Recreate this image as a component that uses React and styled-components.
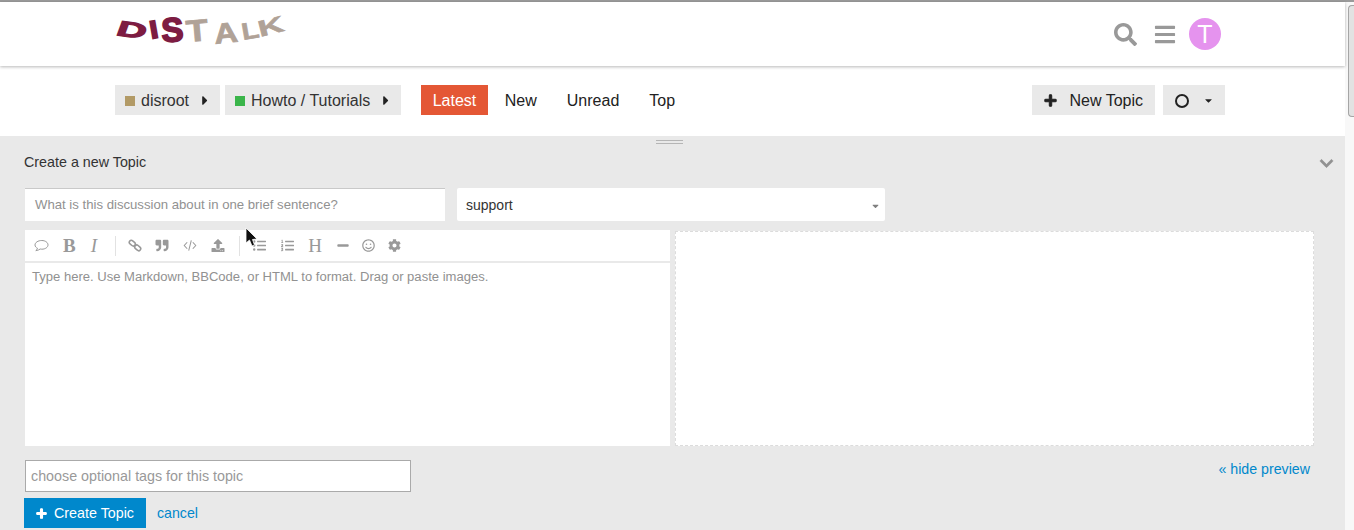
import React from "react";
import styled, { createGlobalStyle } from "styled-components";
import {
  FaSearch, FaBars, FaPlus, FaCaretRight, FaCaretDown, FaChevronDown,
  FaQuoteRight, FaUpload, FaListUl, FaListOl, FaMinus, FaRegSmile, FaCog,
} from "react-icons/fa";

const Global = createGlobalStyle`
  html, body {
    margin: 0;
    height: 530px;
    overflow: hidden;
    background: #fff;
    font-family: "Liberation Sans", Arial, sans-serif;
    color: #222;
  }
  * { box-sizing: border-box; }
`;

const Window = styled.div`
  position: relative;
  display: flex;
  height: 530px;
  border-top: 2px solid #9a9a9a;
`;
const Page = styled.div`
  flex: 1;
  min-width: 0;
  display: flex;
  flex-direction: column;
`;
const Scrollbar = styled.div`
  width: 9px;
  background: #f8f8f8;
  padding: 3px 0 0 3px;
`;
const Thumb = styled.div`
  height: 112px;
  background: #e2e2e2;
  border: 1px solid #a5a5a5;
  border-right: none;
  border-radius: 4px 0 0 4px;
`;

const Header = styled.header`
  height: 64px;
  padding: 0 124px 0 115px;
  display: flex;
  justify-content: space-between;
  background: #fff;
  box-shadow: 0 1px 3px rgba(0, 0, 0, 0.28);
  position: relative;
`;
const Logo = styled.svg`
  width: 176px;
  height: 34px;
  margin-top: 11px;
  overflow: visible;
`;
const LogoLetter = styled.text`
  font-family: "Liberation Sans", sans-serif;
  font-weight: 700;
  font-size: 30px;
  fill: ${(p) => (p.$dark ? "#7d1c42" : "#b0a297")};
  stroke: ${(p) => (p.$dark ? "#7d1c42" : "#b0a297")};
  stroke-width: ${(p) => (p.$dark ? 1.6 : 0.8)};
`;
const HeaderIcons = styled.div`
  display: flex;
  align-items: center;
  height: 64px;
  color: #999;
`;
const SearchIcon = styled(FaSearch)`
  width: 23px;
  height: 23px;
  margin-right: 17px;
`;
const BarsIcon = styled(FaBars)`
  width: 22px;
  height: 23px;
  margin-right: 13px;
`;
const Avatar = styled.div`
  width: 32px;
  height: 32px;
  border-radius: 50%;
  background: #e593ee;
  color: #fff;
  font-size: 25px;
  line-height: 32px;
  text-align: center;
`;

const Nav = styled.nav`
  height: 70px;
  padding: 19px 120px 0 115px;
  display: flex;
  background: #fff;
`;
const Crumb = styled.div`
  height: 30px;
  display: flex;
  align-items: center;
  background: #e9e9e9;
  padding: 1px 10px 0;
  margin-right: 5px;
  font-size: 16px;
  color: #333;
  svg { width: 10px; height: 15px; color: #222; margin-left: 11px; }
`;
const Swatch = styled.span`
  width: 10px;
  height: 10px;
  margin-right: 6px;
  background: ${(p) => p.$color};
`;
const Tabs = styled.div`
  display: flex;
  margin-left: 15px;
  flex: 1;
`;
const Tab = styled.div`
  height: 30px;
  line-height: 31px;
  padding: 0 ${(p) => (p.$active ? 11.5 : 12)}px;
  margin-right: ${(p) => p.$mr || 5}px;
  font-size: 16px;
  color: ${(p) => (p.$active ? "#fff" : "#222")};
  background: ${(p) => (p.$active ? "#e45735" : "transparent")};
`;
const NavButton = styled.div`
  height: 30px;
  display: flex;
  align-items: center;
  background: #e9e9e9;
  padding: 1px 12px 0;
  margin-left: 8px;
  font-size: 16px;
  color: #222;
`;
const PlusIcon = styled(FaPlus)`
  width: 13px;
  height: 13px;
  margin-right: 12px;
  color: #222;
  stroke-width: 40;
`;
const Ring = styled.span`
  width: 14px;
  height: 14px;
  border: 2px solid #222;
  border-radius: 50%;
  margin-right: 15px;
`;
const DropCaret = styled(FaCaretDown)`
  width: 9px;
  height: 11px;
  color: #222;
`;

const Composer = styled.section`
  position: relative;
  flex: 1;
  background: #e9e9e9;
  padding: 0 31px 0 24px;
`;
const Grip = styled.div`
  position: absolute;
  left: 656px;
  top: 4px;
  width: 27px;
  height: 4px;
  border-top: 1px solid #b5b5b5;
  border-bottom: 1px solid #b5b5b5;
`;
const ComposerHead = styled.div`
  height: 52px;
  display: flex;
  align-items: center;
  justify-content: space-between;
  font-size: 14.3px;
  color: #333;
  svg { width: 15px; height: 15px; color: #919191; margin-right: -20px; margin-top: 2px; stroke-width: 20; }
`;
const TitleRow = styled.div`
  display: flex;
  margin-left: 1px;
`;
const TitleInput = styled.div`
  width: 420px;
  height: 33px;
  line-height: 31px;
  padding-left: 10px;
  background: #fff;
  border-top: 1px solid #c9c9c9;
  font-size: 13.17px;
  color: #919191;
`;
const Select = styled.div`
  width: 428px;
  height: 33px;
  margin-left: 12px;
  padding: 0 9px;
  background: #fff;
  border-radius: 2px;
  display: flex;
  align-items: center;
  justify-content: space-between;
  font-size: 14px;
  color: #333;
  svg { width: 7px; height: 10px; color: #808080; margin-right: -3px; margin-top: 2px; }
`;
const EditorRow = styled.div`
  display: flex;
  margin: 9px 0 0 1px;
  height: 216px;
`;
const Editor = styled.div`
  width: 645px;
  background: #fff;
  display: flex;
  flex-direction: column;
`;
const Toolbar = styled.div`
  height: 33px;
  flex: none;
  border-bottom: 2px solid #e9e9e9;
  display: flex;
  align-items: center;
  padding-left: 9px;
  color: #999;
`;
const ToolIcon = styled.span`
  width: ${(p) => p.$w || 14}px;
  margin-right: ${(p) => p.$mr || 14}px;
  height: 14px;
  display: flex;
  align-items: center;
  justify-content: center;
  svg { width: 100%; height: 13px; }
`;
const ToolGlyph = styled.span`
  width: ${(p) => p.$w}px;
  margin-right: ${(p) => p.$mr}px;
  font-family: "Liberation Serif", serif;
  font-size: ${(p) => p.$size || 17}px;
  font-weight: ${(p) => (p.$bold ? 700 : 400)};
  font-style: ${(p) => (p.$italic ? "italic" : "normal")};
  line-height: 14px;
  text-align: center;
`;
const ToolDivider = styled.span`
  width: 1px;
  height: 20px;
  background: #e2e2e2;
  margin-right: 12px;
`;
const EditorText = styled.div`
  padding: 6px 7px;
  font-size: 13.06px;
  line-height: 16px;
  color: #919191;
`;
const Preview = styled.div`
  width: 639px;
  margin: 1px 0 0 5px;
  background: #fff;
  border: 1px dashed #dcdcdc;
`;
const TagsRow = styled.div`
  display: flex;
  justify-content: space-between;
  margin: 14px 0 0 1px;
`;
const TagsInput = styled.div`
  width: 386px;
  height: 32px;
  line-height: 30px;
  padding-left: 5px;
  background: #fff;
  border: 1px solid #aaa;
  font-size: 14.3px;
  color: #999;
`;
const Link = styled.span`
  font-size: 14.2px;
  color: #0088cc;
`;
const HidePreview = styled(Link)`
  margin: 1px 4px 0 0;
  line-height: 16px;
`;
const Actions = styled.div`
  display: flex;
  align-items: center;
  margin-top: 6px;
`;
const CreateButton = styled.div`
  width: 122px;
  height: 30px;
  display: flex;
  align-items: center;
  padding-left: 12px;
  background: #0088cc;
  color: #fff;
  font-size: 14.3px;
  margin-right: 11px;
  svg { width: 11px; height: 11px; margin-right: 7px; stroke-width: 50; }
`;
const Cursor = styled.svg`
  position: absolute;
  left: 245px;
  top: 225px;
  width: 14px;
  height: 22px;
`;

const logoLetters = [
  { c: "D", dark: true, t: "translate(0 22) rotate(8) skewX(-12) scale(1.35 0.72)" },
  { c: "I", dark: true, t: "translate(36 26) rotate(-10) scale(1.05 0.85)" },
  { c: "S", dark: true, t: "translate(47 29) rotate(-3) scale(1.1 1.12)" },
  { c: "T", t: "translate(72 29) rotate(-5) scale(1.2 1.02)" },
  { c: "A", t: "translate(100 31) rotate(-6) scale(1.1 0.95)" },
  { c: "L", t: "translate(128 27) rotate(-10) scale(0.95 0.78)" },
  { c: "K", t: "translate(145 24) rotate(-14) scale(1.2 0.75)" },
];

function CommentIcon() {
  return (
    <svg viewBox="0 0 15 13" fill="none" stroke="currentColor" strokeWidth="1">
      <path d="M7.8 1.5 C4 1.5 1 3.5 1 6 C1 7.4 2 8.6 3.5 9.3 C3.3 10.3 2.6 11.1 1.8 11.6 C3.6 11.5 5.2 10.8 6.2 10 C6.7 10.1 7.2 10.2 7.8 10.2 C11.3 10.2 14 8.3 14 5.9 C14 3.5 11.3 1.5 7.8 1.5 Z" />
    </svg>
  );
}

function LinkIcon() {
  return (
    <svg viewBox="0 0 14 14" fill="none" stroke="currentColor" strokeWidth="1.7">
      <rect x="0.6" y="2.2" width="7" height="4.4" rx="2.2" transform="rotate(40 4 4.4)" />
      <rect x="6.4" y="7.4" width="7" height="4.4" rx="2.2" transform="rotate(40 10 9.6)" />
    </svg>
  );
}

function CodeIcon() {
  return (
    <svg viewBox="0 0 14 14" fill="none" stroke="currentColor" strokeWidth="1.1">
      <path d="M4 3.5 L0.8 7 L4 10.5 M10 3.5 L13.2 7 L10 10.5 M8.4 1.5 L5.6 12.5" />
    </svg>
  );
}

export default function App() {
  return (
    <Window>
      <Global />
      <Page>
        <Header>
          <Logo viewBox="0 0 176 34" role="img" aria-label="DISTALK">
            {logoLetters.map((l) => (
              <LogoLetter key={l.c} $dark={l.dark} transform={l.t}>
                {l.c}
              </LogoLetter>
            ))}
          </Logo>
          <HeaderIcons>
            <SearchIcon />
            <BarsIcon />
            <Avatar>T</Avatar>
          </HeaderIcons>
        </Header>
        <Nav>
          <Crumb>
            <Swatch $color="#b29a66" />
            disroot
            <FaCaretRight />
          </Crumb>
          <Crumb>
            <Swatch $color="#3ab54a" />
            Howto / Tutorials
            <FaCaretRight />
          </Crumb>
          <Tabs>
            <Tab $active>Latest</Tab>
            <Tab $mr={6}>New</Tab>
            <Tab $mr={6}>Unread</Tab>
            <Tab>Top</Tab>
          </Tabs>
          <NavButton>
            <PlusIcon />
            New Topic
          </NavButton>
          <NavButton>
            <Ring />
            <DropCaret />
          </NavButton>
        </Nav>
        <Composer>
          <Grip />
          <ComposerHead>
            Create a new Topic
            <FaChevronDown />
          </ComposerHead>
          <TitleRow>
            <TitleInput>What is this discussion about in one brief sentence?</TitleInput>
            <Select>
              support
              <FaCaretDown />
            </Select>
          </TitleRow>
          <EditorRow>
            <Editor>
              <Toolbar>
                <ToolIcon $w={15}><CommentIcon /></ToolIcon>
                <ToolGlyph $w={12} $mr={14} $size={19} $bold>B</ToolGlyph>
                <ToolGlyph $w={10} $mr={16} $size={19} $italic>I</ToolGlyph>
                <ToolDivider />
                <ToolIcon $mr={13}><LinkIcon /></ToolIcon>
                <ToolIcon><FaQuoteRight /></ToolIcon>
                <ToolIcon><CodeIcon /></ToolIcon>
                <ToolIcon><FaUpload /></ToolIcon>
                <ToolDivider />
                <ToolIcon $w={15} $mr={13}><FaListUl /></ToolIcon>
                <ToolIcon $w={15} $mr={13}><FaListOl /></ToolIcon>
                <ToolGlyph $w={14} $mr={15} $size={19}>H</ToolGlyph>
                <ToolIcon $w={12} $mr={13}><FaMinus /></ToolIcon>
                <ToolIcon $w={13} $mr={13}><FaRegSmile /></ToolIcon>
                <ToolIcon $w={13}><FaCog /></ToolIcon>
              </Toolbar>
              <EditorText>Type here. Use Markdown, BBCode, or HTML to format. Drag or paste images.</EditorText>
            </Editor>
            <Preview />
          </EditorRow>
          <TagsRow>
            <TagsInput>choose optional tags for this topic</TagsInput>
            <HidePreview>« hide preview</HidePreview>
          </TagsRow>
          <Actions>
            <CreateButton>
              <FaPlus />
              Create Topic
            </CreateButton>
            <Link>cancel</Link>
          </Actions>
        </Composer>
      </Page>
      <Scrollbar>
        <Thumb />
      </Scrollbar>
      <Cursor viewBox="0 0 14 22">
        <path d="M1 1 L1 16 L4.5 13 L7 19 L9.5 18 L7.5 12.5 L12 12 Z" fill="#111" stroke="#fff" strokeWidth="0.8" />
      </Cursor>
    </Window>
  );
}
